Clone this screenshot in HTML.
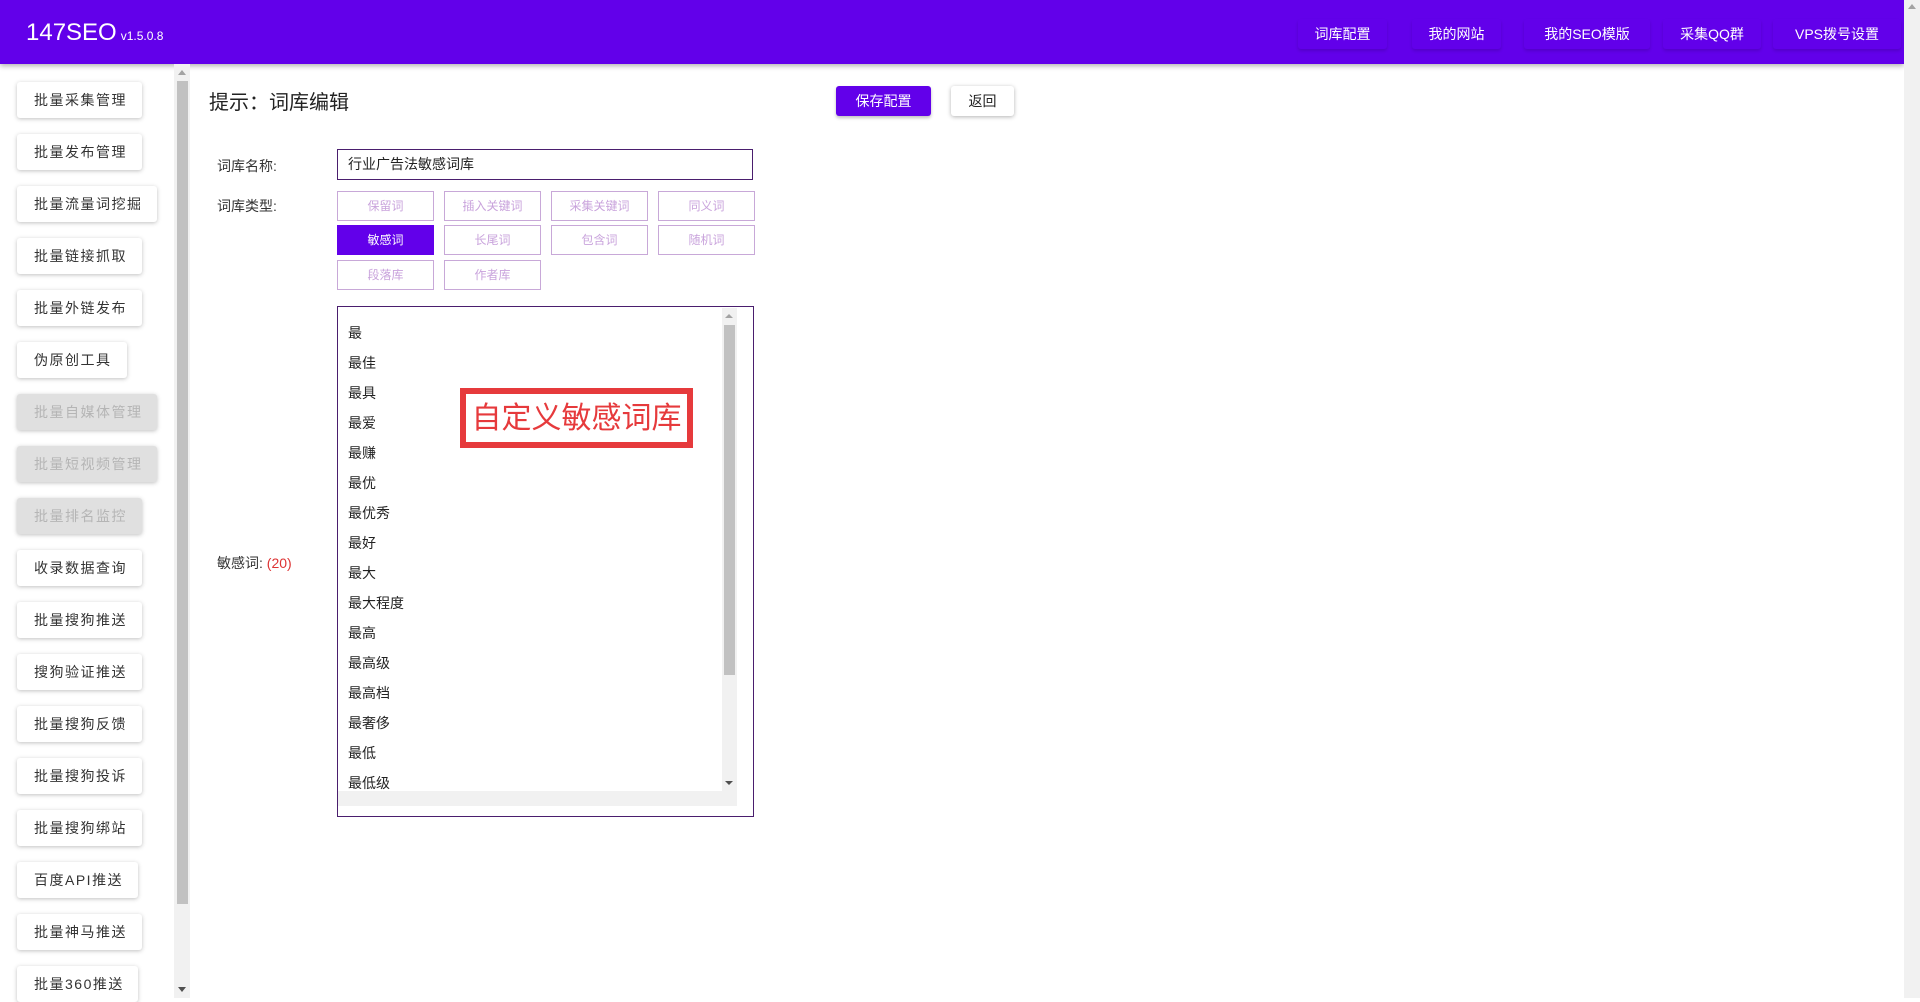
<!DOCTYPE html>
<html><head><meta charset="utf-8"><style>
*{box-sizing:border-box;margin:0;padding:0}
body{width:1920px;height:998px;overflow:hidden;background:#fff;font-family:"Liberation Sans","Noto Sans CJK SC",sans-serif;position:relative;color:#222}
.hdr{position:absolute;left:0;top:0;width:1904px;height:64px;background:#6200ea;box-shadow:0 2px 5px rgba(0,0,0,.3)}
.logo{position:absolute;left:26px;top:19px;color:#fff;font-size:24px}
.logo small{font-size:12px;margin-left:4px}
.nav{position:absolute;top:19px;height:30px;line-height:30px;color:#fff;font-size:14px;text-align:center;box-shadow:0 2px 3px rgba(0,0,0,.15);border-radius:3px}
.vs{position:absolute;right:0;top:0;width:16px;height:998px;background:#f1f1f1}
.sb{position:absolute;left:174px;top:64px;width:16px;height:934px;background:#f1f1f1}
.sb i{position:absolute;left:3px;top:17px;width:11px;height:823px;background:#c1c1c1}
.btn{position:absolute;left:17px;height:36px;line-height:36px;background:#fff;font-size:14px;letter-spacing:1.5px;padding-left:17px;box-shadow:0 1px 4px rgba(0,0,0,.25);border-radius:3px;color:#333}
.btn.d{background:#e0e0e0;color:#b5b5b5}
.t{position:absolute;font-size:14px;color:#333}
.tb{position:absolute;width:97px;height:30px;line-height:28px;border:1px solid #c8a8d8;color:#c9a3dc;text-align:center;font-size:12px}
.tb.on{background:#6200ea;color:#fff;border-color:#6200ea}
.li{position:absolute;left:348px;font-size:14px;color:#222}
</style></head><body>
<div class="hdr">
<div class="logo">147SEO<small>v1.5.0.8</small></div>
<div class="nav" style="left:1298px;width:89px">词库配置</div>
<div class="nav" style="left:1412px;width:89px">我的网站</div>
<div class="nav" style="left:1524px;width:126px">我的SEO模版</div>
<div class="nav" style="left:1663px;width:98px">采集QQ群</div>
<div class="nav" style="left:1773px;width:128px">VPS拨号设置</div>
</div>
<div class="vs"><div style="position:absolute;left:4px;top:4px;border:4px solid transparent;border-bottom:5px solid #a3a3a3;border-top:0"></div></div>
<div class="sb"><i></i><div style="position:absolute;left:4px;top:6px;border:4px solid transparent;border-bottom:5px solid #a3a3a3;border-top:0"></div><div style="position:absolute;left:4px;bottom:6px;border:4px solid transparent;border-top:5px solid #505050;border-bottom:0"></div></div>
<div class="btn" style="top:82px;width:125px">批量采集管理</div>
<div class="btn" style="top:134px;width:125px">批量发布管理</div>
<div class="btn" style="top:186px;width:140px">批量流量词挖掘</div>
<div class="btn" style="top:238px;width:125px">批量链接抓取</div>
<div class="btn" style="top:290px;width:125px">批量外链发布</div>
<div class="btn" style="top:342px;width:110px">伪原创工具</div>
<div class="btn d" style="top:394px;width:140px">批量自媒体管理</div>
<div class="btn d" style="top:446px;width:140px">批量短视频管理</div>
<div class="btn d" style="top:498px;width:125px">批量排名监控</div>
<div class="btn" style="top:550px;width:125px">收录数据查询</div>
<div class="btn" style="top:602px;width:125px">批量搜狗推送</div>
<div class="btn" style="top:654px;width:125px">搜狗验证推送</div>
<div class="btn" style="top:706px;width:125px">批量搜狗反馈</div>
<div class="btn" style="top:758px;width:125px">批量搜狗投诉</div>
<div class="btn" style="top:810px;width:125px">批量搜狗绑站</div>
<div class="btn" style="top:862px;width:121px">百度API推送</div>
<div class="btn" style="top:914px;width:125px">批量神马推送</div>
<div class="btn" style="top:966px;width:121px">批量360推送</div>

<div class="t" style="left:209px;top:86px;font-size:20px;color:#222">提示：词库编辑</div>
<div style="position:absolute;left:836px;top:86px;width:95px;height:30px;line-height:30px;background:#6200ea;color:#fff;font-size:14px;text-align:center;border-radius:3px;box-shadow:0 2px 3px rgba(0,0,0,.25)">保存配置</div>
<div style="position:absolute;left:951px;top:86px;width:63px;height:30px;line-height:30px;background:#fff;color:#222;font-size:14px;text-align:center;border-radius:3px;box-shadow:0 1px 4px rgba(0,0,0,.3)">返回</div>

<div class="t" style="left:217px;top:156px">词库名称:</div>
<div style="position:absolute;left:337px;top:149px;width:416px;height:31px;border:1px solid #4a1e6e;font-size:14px;line-height:29px;padding-left:10px">行业广告法敏感词库</div>
<div class="t" style="left:217px;top:196px">词库类型:</div>
<div class="tb" style="left:337px;top:191px">保留词</div>
<div class="tb" style="left:444px;top:191px">插入关键词</div>
<div class="tb" style="left:551px;top:191px">采集关键词</div>
<div class="tb" style="left:658px;top:191px">同义词</div>
<div class="tb on" style="left:337px;top:225px">敏感词</div>
<div class="tb" style="left:444px;top:225px">长尾词</div>
<div class="tb" style="left:551px;top:225px">包含词</div>
<div class="tb" style="left:658px;top:225px">随机词</div>
<div class="tb" style="left:337px;top:260px">段落库</div>
<div class="tb" style="left:444px;top:260px">作者库</div>

<div class="t" style="left:217px;top:553px">敏感词: <span style="color:#d33">(20)</span></div>

<div style="position:absolute;left:337px;top:306px;width:417px;height:511px;border:1px solid #4a1e6e"></div>
<div style="position:absolute;left:722px;top:308px;width:15px;height:483px;background:#f1f1f1"><div style="position:absolute;left:2px;top:17px;width:11px;height:350px;background:#c1c1c1"></div><div style="position:absolute;left:3px;top:6px;border:4px solid transparent;border-bottom:4px solid #a3a3a3;border-top:0"></div><div style="position:absolute;left:3px;bottom:6px;border:4px solid transparent;border-top:4px solid #505050;border-bottom:0"></div></div>
<div style="position:absolute;left:338px;top:791px;width:399px;height:15px;background:#f1f1f1"></div>
<div class="li" style="top:323px">最</div>
<div class="li" style="top:353px">最佳</div>
<div class="li" style="top:383px">最具</div>
<div class="li" style="top:413px">最爱</div>
<div class="li" style="top:443px">最赚</div>
<div class="li" style="top:473px">最优</div>
<div class="li" style="top:503px">最优秀</div>
<div class="li" style="top:533px">最好</div>
<div class="li" style="top:563px">最大</div>
<div class="li" style="top:593px">最大程度</div>
<div class="li" style="top:623px">最高</div>
<div class="li" style="top:653px">最高级</div>
<div class="li" style="top:683px">最高档</div>
<div class="li" style="top:713px">最奢侈</div>
<div class="li" style="top:743px">最低</div>
<div class="li" style="top:773px">最低级</div>
<div style="position:absolute;left:460px;top:388px;width:233px;height:60px;border:6px solid #e63a3c;background:#fff;color:#e63a3c;font-size:30px;line-height:50px;text-align:center">自定义敏感词库</div>
</body></html>
